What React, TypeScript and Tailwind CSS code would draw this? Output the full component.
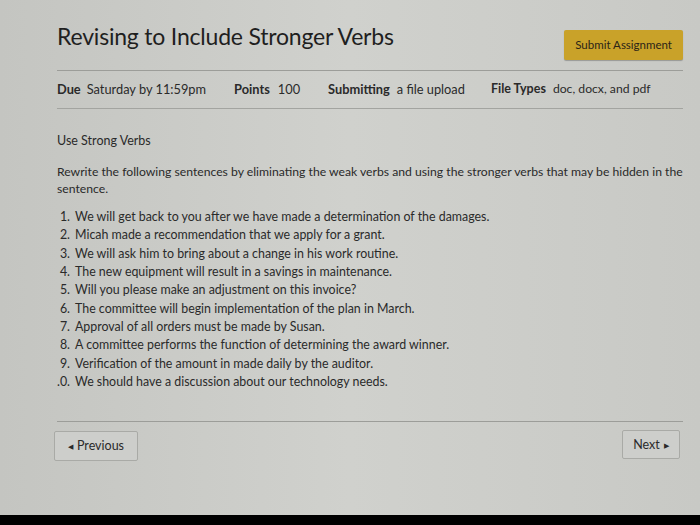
import React from "react";

const items = [
  "We will get back to you after we have made a determination of the damages.",
  "Micah made a recommendation that we apply for a grant.",
  "We will ask him to bring about a change in his work routine.",
  "The new equipment will result in a savings in maintenance.",
  "Will you please make an adjustment on this invoice?",
  "The committee will begin implementation of the plan in March.",
  "Approval of all orders must be made by Susan.",
  "A committee performs the function of determining the award winner.",
  "Verification of the amount in made daily by the auditor.",
  "We should have a discussion about our technology needs.",
];

export default function App() {
  return (
    <div
      className="w-[700px] h-[525px] flex flex-col overflow-hidden bg-gradient-to-r from-[#c4c5c1] via-[#d0d1cd] to-[#c8c9c5] text-[#2a2a2a]"
      style={{ fontFamily: "Lato, 'Noto Sans', sans-serif" }}
    >
      <div className="flex-1 flex flex-col pl-[57px] pr-[17px]">
        <div className="flex items-start justify-between pt-[21px]">
          <h1 className="text-[23px] leading-[30px] text-[#1f1f1f] tracking-[-0.2px]">
            Revising to Include Stronger Verbs
          </h1>
          <button className="mt-[9px] h-[30px] px-[11px] bg-[#c9a229] rounded-[2px] text-[11.5px] text-[#2b2418] shadow-[0_1px_1px_rgba(0,0,0,0.25)]">
            Submit Assignment
          </button>
        </div>
        <div className="mt-[10px] h-px bg-[#9c9d99]" />
        <div className="flex items-center h-[37px] text-[12.8px] text-[#2a2a2a]">
          <span className="font-bold">Due</span>
          <span className="ml-[6px]">Saturday by 11:59pm</span>
          <span className="font-bold ml-[28px]">Points</span>
          <span className="ml-[8px]">100</span>
          <span className="font-bold ml-[28px]">Submitting</span>
          <span className="ml-[7px]">a file upload</span>
          <span className="font-bold ml-[26px] text-[12.5px]">File Types</span>
          <span className="ml-[7px] text-[12.2px]">doc, docx, and pdf</span>
        </div>
        <div className="h-px bg-[#a3a4a0]" />
        <div className="mt-[23px] text-[12.5px] leading-[18px]">Use Strong Verbs</div>
        <p className="mt-[14px] text-[12.2px] leading-[16.5px]">
          Rewrite the following sentences by eliminating the weak verbs and using the stronger verbs that may be hidden in the sentence.
        </p>
        <ol className="mt-[11px] text-[12.4px] leading-[18.35px]">
          {items.map((t, i) => (
            <li key={i} className="flex">
              <span className="w-[13px] shrink-0 flex justify-end whitespace-nowrap">{i === 9 ? ".0." : `${i + 1}.`}</span>
              <span className="ml-[5px]">{t}</span>
            </li>
          ))}
        </ol>
        <div className="mt-[30px] h-px bg-[#9c9d99]" />
        <div className="flex justify-between items-start mt-[9px]">
          <button className="-ml-[3px] w-[84px] h-[30px] border border-[#a9aaa6] bg-[#cdcecb] rounded-[2px] text-[12.5px] flex items-center justify-center gap-[4px]">
            <span className="text-[7px]">◀</span>
            <span>Previous</span>
          </button>
          <button className="mr-[3px] -mt-[1px] w-[58px] h-[29px] border border-[#a9aaa6] bg-[#cdcecb] rounded-[2px] text-[12.5px] flex items-center justify-center gap-[4px]">
            <span>Next</span>
            <span className="text-[7px]">▶</span>
          </button>
        </div>
      </div>
      <div className="h-[10px] bg-black shrink-0" />
    </div>
  );
}
